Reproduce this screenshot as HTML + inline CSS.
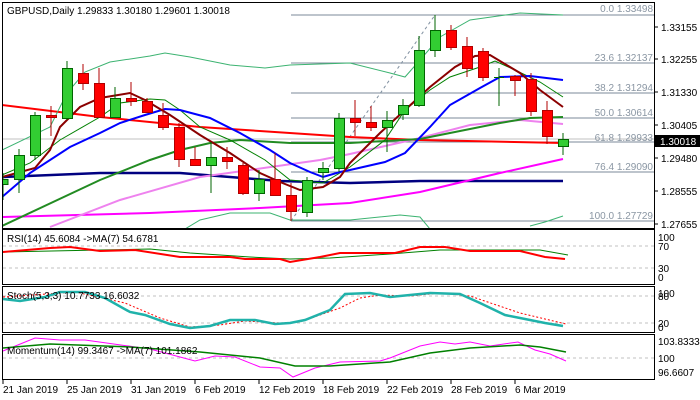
<!DOCTYPE html>
<html><head><meta charset="utf-8"><style>
html,body{margin:0;padding:0;background:#fff;width:700px;height:400px;overflow:hidden}
svg{display:block}
text{font-family:"Liberation Sans",sans-serif;font-size:10px}
</style></head><body>
<svg width="700" height="400" viewBox="0 0 700 400" xmlns="http://www.w3.org/2000/svg">
<rect width="700" height="400" fill="#fff"/>
<!-- main chart -->
<defs><clipPath id="mc"><rect x="3" y="3" width="651" height="225"/></clipPath></defs>
<g clip-path="url(#mc)">
<!-- fib lines -->
<g stroke="#7b8a99" stroke-width="1">
<line x1="291" y1="15" x2="654" y2="15"/>
<line x1="291" y1="63" x2="654" y2="63"/>
<line x1="291" y1="93" x2="654" y2="93"/>
<line x1="291" y1="118" x2="654" y2="118"/>
<line x1="291" y1="142" x2="654" y2="142"/>
<line x1="291" y1="172" x2="654" y2="172"/>
<line x1="291" y1="221" x2="654" y2="221"/>
</g>
<line x1="3" y1="139" x2="654" y2="139" stroke="#c0c0c0"/>
<line x1="291" y1="221" x2="435" y2="15" stroke="#8090a0" stroke-dasharray="3,3"/>
<g fill="#8a96a3" text-anchor="end">
<text x="653" y="12">0.0 1.33498</text>
<text x="653" y="61">23.6 1.32137</text>
<text x="653" y="91">38.2 1.31294</text>
<text x="653" y="116">50.0 1.30614</text>
<text x="653" y="141">61.8 1.29933</text>
<text x="653" y="170">76.4 1.29090</text>
<text x="653" y="219">100.0 1.27729</text>
</g>
<!-- lines -->
<g fill="none">
<polyline stroke="#ff0000" stroke-width="2" points="2,105 100,117 200,127 350,137 420,140 563,143"/>
<polyline stroke="#000080" stroke-width="2.5" points="2,177 100,173 180,173 280,181 350,183 420,181 530,181 563,181"/>
<polyline stroke="#ff00ff" stroke-width="2" points="2,217 150,213 260,208 350,203 420,192 500,173 563,159"/>
<polyline stroke="#ee82ee" stroke-width="2" points="50,227 120,200 200,177 320,160 350,154 420,138 470,125 520,120 563,124"/>
<polyline stroke="#228b22" stroke-width="2" points="2,226 100,180 150,160 180,150 210,143 240,140 290,143 350,143 420,139 450,133 500,123 530,118 563,117"/>
<polyline stroke="#3cb371" stroke-width="1" points="2,150 50,127 67,93 85,72 110,62 150,56 165,53 190,57 230,65 265,68 290,65 350,63 390,73 405,77 420,60 440,37 470,20 520,13 563,15"/>
<polyline stroke="#3cb371" stroke-width="1" points="180,232 200,220 230,213 270,213 290,220 350,220 400,215 420,217 430,229"/>
<polyline stroke="#3cb371" stroke-width="1" points="530,226 545,222 563,216"/>
<polyline stroke="#008000" stroke-width="1" points="2,175 30,163 60,140 100,117 120,103 150,99 165,100 180,110 200,127 230,140 265,160 290,180 323,183 350,167 385,140 405,110 430,90 450,77 480,67 495,61 515,70 540,82 563,97"/>
<polyline stroke="#0000ff" stroke-width="2" points="2,197 30,173 70,147 100,133 120,123 145,115 165,109 180,110 210,118 240,133 270,150 290,163 310,172 323,177 340,172 350,170 385,162 405,153 430,127 450,105 480,88 500,77 530,76 563,80"/>
<polyline stroke="#8b0000" stroke-width="2" points="2,177 35,168 50,150 60,127 80,107 100,98 130,93 145,100 170,115 200,135 230,153 260,173 280,182 300,190 323,187 340,177 350,163 380,133 405,110 430,87 455,67 475,56 490,55 520,73 540,90 563,107"/>
</g>
<!-- candles -->
<g stroke="#006400" fill="#32cd32">
<line x1="3" y1="173" x2="3" y2="200"/><rect x="-2" y="179.5" width="10" height="5"/>
<line x1="19" y1="149" x2="19" y2="193"/><rect x="14.5" y="155.5" width="10" height="24"/>
<line x1="35" y1="112" x2="35" y2="160"/><rect x="30.5" y="115.5" width="10" height="40"/>
<line x1="67" y1="61" x2="67" y2="120"/><rect x="62.5" y="68.5" width="10" height="50"/>
<line x1="115" y1="87" x2="115" y2="118"/><rect x="110.5" y="98.5" width="10" height="19"/>
<line x1="211" y1="142" x2="211" y2="193"/><rect x="206.5" y="157.5" width="10" height="8"/>
<line x1="259" y1="170" x2="259" y2="201"/><rect x="254.5" y="179.5" width="10" height="14"/>
<line x1="307" y1="177" x2="307" y2="217"/><rect x="302.5" y="180.5" width="10" height="32"/>
<line x1="323" y1="162" x2="323" y2="180"/><rect x="318.5" y="168.5" width="10" height="4"/>
<line x1="339" y1="113" x2="339" y2="172"/><rect x="334.5" y="118.5" width="10" height="50"/>
<line x1="387" y1="111" x2="387" y2="152"/><rect x="382.5" y="120.5" width="10" height="7"/>
<line x1="403" y1="99" x2="403" y2="120"/><rect x="398.5" y="105.5" width="10" height="9"/>
<line x1="419" y1="36" x2="419" y2="107"/><rect x="414.5" y="50.5" width="10" height="55"/>
<line x1="435" y1="15" x2="435" y2="57"/><rect x="430.5" y="30.5" width="10" height="20"/>
<line x1="499" y1="68" x2="499" y2="106"/><line x1="494" y1="77.5" x2="504" y2="77.5"/>
<line x1="563" y1="133" x2="563" y2="155"/><rect x="558.5" y="139.5" width="10" height="7"/>
</g>
<g stroke="#b00000" fill="#ff0000">
<line x1="51" y1="106" x2="51" y2="136"/><rect x="46.5" y="115.5" width="10" height="2"/>
<line x1="83" y1="64" x2="83" y2="90"/><rect x="78.5" y="73.5" width="10" height="10"/>
<line x1="99" y1="68" x2="99" y2="117"/><rect x="94.5" y="83.5" width="10" height="34"/>
<line x1="131" y1="82" x2="131" y2="106"/><rect x="126.5" y="98.5" width="10" height="3"/>
<line x1="147" y1="98" x2="147" y2="112"/><rect x="142.5" y="101.5" width="10" height="11"/>
<line x1="163" y1="103" x2="163" y2="130"/><rect x="158.5" y="115.5" width="10" height="12"/>
<line x1="179" y1="123" x2="179" y2="167"/><rect x="174.5" y="127.5" width="10" height="32"/>
<line x1="195" y1="147" x2="195" y2="165"/><rect x="190.5" y="159.5" width="10" height="6"/>
<line x1="227" y1="147" x2="227" y2="169"/><rect x="222.5" y="157.5" width="10" height="4"/>
<line x1="243" y1="163" x2="243" y2="195"/><rect x="238.5" y="165.5" width="10" height="28"/>
<line x1="275" y1="153" x2="275" y2="195"/><rect x="270.5" y="179.5" width="10" height="16"/>
<line x1="291" y1="183" x2="291" y2="221"/><rect x="286.5" y="195.5" width="10" height="16"/>
<line x1="355" y1="100" x2="355" y2="136"/><rect x="350.5" y="118.5" width="10" height="4"/>
<line x1="371" y1="106" x2="371" y2="131"/><rect x="366.5" y="122.5" width="10" height="5"/>
<line x1="451" y1="25" x2="451" y2="50"/><rect x="446.5" y="30.5" width="10" height="17"/>
<line x1="467" y1="37" x2="467" y2="77"/><rect x="462.5" y="46.5" width="10" height="22"/>
<line x1="483" y1="48" x2="483" y2="81"/><rect x="478.5" y="51.5" width="10" height="26"/>
<line x1="515" y1="75" x2="515" y2="96"/><rect x="510.5" y="76.5" width="10" height="4"/>
<line x1="531" y1="73" x2="531" y2="116"/><rect x="526.5" y="79.5" width="10" height="32"/>
<line x1="547" y1="101" x2="547" y2="144"/><rect x="542.5" y="110.5" width="10" height="26"/>
</g>
</g>
<rect x="2.5" y="2.5" width="652" height="226" fill="none" stroke="#000"/>
<text x="7" y="14" fill="#000">GBPUSD,Daily  1.29833 1.30180 1.29601 1.30018</text>
<!-- price axis -->
<g stroke="#000"><line x1="654" y1="27" x2="658" y2="27"/><line x1="654" y1="59" x2="658" y2="59"/><line x1="654" y1="92" x2="658" y2="92"/><line x1="654" y1="125" x2="658" y2="125"/><line x1="654" y1="158" x2="658" y2="158"/><line x1="654" y1="191" x2="658" y2="191"/><line x1="654" y1="224" x2="658" y2="224"/></g>
<g fill="#000">
<text x="661" y="31">1.33155</text><text x="661" y="63">1.32255</text><text x="661" y="96">1.31330</text><text x="661" y="129">1.30405</text><text x="661" y="162">1.29480</text><text x="661" y="195">1.28555</text><text x="661" y="228">1.27655</text>
</g>
<rect x="655" y="135" width="45" height="12" fill="#000"/>
<text x="660" y="145" fill="#fff">1.30018</text>

<!-- RSI -->
<rect x="2.5" y="229.5" width="652" height="55" fill="none" stroke="#000"/>
<g stroke="#c0c0c0" stroke-dasharray="3,3"><line x1="3" y1="246" x2="654" y2="246"/><line x1="3" y1="268" x2="654" y2="268"/></g>
<polyline fill="none" stroke="#008000" stroke-width="1" points="3,252 100,250 150,249 190,253 250,257 290,259 330,258 390,254 440,250 540,250 568,255"/>
<polyline fill="none" stroke="#ff0000" stroke-width="2" points="3,252 50,248 70,247 100,251 135,250 180,257 230,257 245,259 280,259 290,262 320,257 340,253 395,253 420,247 445,247 470,251 520,251 545,257 565,259"/>
<text x="7" y="242" fill="#000">RSI(14) 45.6084  -&gt;MA(7) 54.6781</text>
<g fill="#000"><text x="658" y="241">100</text><text x="658" y="250">70</text><text x="658" y="272">30</text><text x="658" y="281">0</text></g>

<!-- Stoch -->
<rect x="2.5" y="286.5" width="652" height="46" fill="none" stroke="#000"/>
<g stroke="#c0c0c0" stroke-dasharray="3,3"><line x1="3" y1="296" x2="654" y2="296"/><line x1="3" y1="323" x2="654" y2="323"/></g>
<polyline fill="none" stroke="#ff0000" stroke-width="1" stroke-dasharray="2,2" points="3,297 75,292 125,303 160,318 190,327 220,325 245,321 280,323 300,322 340,308 360,298 380,295 410,296 440,293 470,296 520,313 566,324"/>
<polyline fill="none" stroke="#20b2aa" stroke-width="2.5" points="3,299 20,301 45,297 60,292 85,292 105,298 130,312 145,315 170,324 190,328 210,326 230,320 255,320 275,324 290,323 305,320 330,310 345,294 370,293 390,297 410,295 430,293 460,294 480,303 505,315 520,318 545,323 563,326"/>
<text x="7" y="299" fill="#000">Stoch(5,3,3) 10.7733 16.6032</text>
<g fill="#000"><text x="658" y="297">100</text><text x="658" y="300">80</text><text x="658" y="327">20</text><text x="658" y="331">0</text></g>

<!-- Momentum -->
<rect x="2.5" y="334.5" width="652" height="45" fill="none" stroke="#000"/>
<line x1="3" y1="358" x2="654" y2="358" stroke="#c0c0c0" stroke-dasharray="3,3"/>
<polyline fill="none" stroke="#ff00ff" stroke-width="1" points="3,351 35,338 60,340 85,340 150,349 195,361 215,356 235,357 260,367 280,368 293,377 315,368 340,362 380,361 390,358 420,346 440,342 455,344 470,342 490,346 518,342 535,350 550,354 566,361"/>
<polyline fill="none" stroke="#008000" stroke-width="1.5" points="3,348 50,344 130,347 200,352 260,358 295,366 330,366 390,362 430,353 470,348 520,345 540,347 566,352"/>
<text x="7" y="354" fill="#000">Momentum(14) 99.3467  -&gt;MA(7) 101.1862</text>
<g fill="#000"><text x="658" y="345">103.8333</text><text x="658" y="362">100</text><text x="658" y="376">96.6607</text></g>

<!-- date axis -->
<g stroke="#000"><line x1="3" y1="379" x2="3" y2="384"/><line x1="67" y1="379" x2="67" y2="384"/><line x1="131" y1="379" x2="131" y2="384"/><line x1="195" y1="379" x2="195" y2="384"/><line x1="259" y1="379" x2="259" y2="384"/><line x1="323" y1="379" x2="323" y2="384"/><line x1="387" y1="379" x2="387" y2="384"/><line x1="451" y1="379" x2="451" y2="384"/><line x1="515" y1="379" x2="515" y2="384"/></g>
<g fill="#000">
<text x="3" y="393">21 Jan 2019</text><text x="67" y="393">25 Jan 2019</text><text x="131" y="393">31 Jan 2019</text><text x="195" y="393">6 Feb 2019</text><text x="259" y="393">12 Feb 2019</text><text x="323" y="393">18 Feb 2019</text><text x="387" y="393">22 Feb 2019</text><text x="451" y="393">28 Feb 2019</text><text x="515" y="393">6 Mar 2019</text>
</g>
</svg>
</body></html>
